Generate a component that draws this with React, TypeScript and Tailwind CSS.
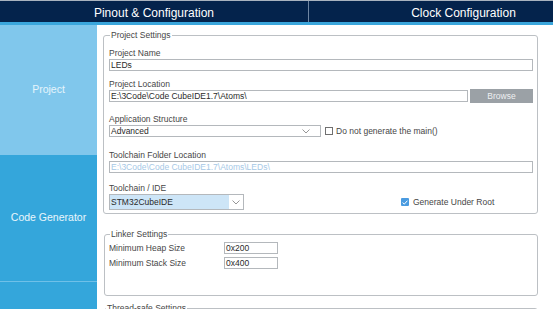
import React from "react";

const Chevron = () => (
  <svg width="8" height="5" viewBox="0 0 8 5" fill="none">
    <path d="M0.5 0.5L4 4L7.5 0.5" stroke="#8a8a8a" strokeWidth="0.9" />
  </svg>
);

const Label = ({ children }: { children: React.ReactNode }) => (
  <div className="text-[8.5px] leading-[10px] text-[#464646]">{children}</div>
);

const TextBox = ({ value, muted = false, className = "" }: { value: string; muted?: boolean; className?: string }) => (
  <div
    className={`h-[12px] border border-[#b4b8bc] bg-white pl-[1px] flex items-center text-[8.5px] leading-[10px] whitespace-nowrap overflow-hidden ${
      muted ? "text-[#a6c8e6]" : "text-[#2a2a2a]"
    } ${className}`}
  >
    {value}
  </div>
);

export default function App() {
  return (
    <div
      className="w-[553px] h-[309px] overflow-hidden bg-white border-t border-[#a9b3bf] flex flex-col"
      style={{ fontFamily: '"Liberation Sans", Arial, sans-serif' }}
    >
      {/* top tabs */}
      <div className="h-[21px] bg-[#04234c] flex shrink-0">
        <div className="w-[309px] shrink-0 border-r border-[#6f86a3] flex items-center justify-center pt-[2px] text-[12px] text-white">
          Pinout &amp; Configuration
        </div>
        <div className="w-[309px] shrink-0 flex items-center justify-center pt-[2px] text-[12px] text-white">
          Clock Configuration
        </div>
      </div>
      <div className="h-[3px] bg-[#3aa6dc] shrink-0" />

      <div className="flex flex-1 min-h-0">
        {/* sidebar */}
        <div className="w-[97px] shrink-0 flex flex-col">
          <div className="h-[130px] bg-[#80c7ec] flex items-center justify-center text-[10.5px] text-white/80">
            Project
          </div>
          <div className="h-[127px] bg-[#34a6db] border-b border-[#6fc0e8] flex items-center justify-center text-[10.5px] text-white/90">
            Code Generator
          </div>
          <div className="flex-1 bg-[#34a6db]" />
        </div>

        {/* content */}
        <div className="flex-1 pl-[6px] pt-[5px] flex flex-col">
          <fieldset className="w-[435px] border border-[#bcc0c4] rounded-[3px] pl-[5px] pr-[4px] pb-[3px]">
            <legend className="ml-[1px] px-[1px] text-[8.5px] leading-[10px] text-[#464646]">Project Settings</legend>
            <div className="mt-[8px]">
              <Label>Project Name</Label>
            </div>
            <TextBox value="LEDs" className="mt-[1px]" />

            <div className="mt-[8px]">
              <Label>Project Location</Label>
            </div>
            <div className="mt-[1px] flex items-center gap-[2px] h-[12px]">
              <TextBox value="E:\3Code\Code CubeIDE1.7\Atoms\" className="w-[359px]" />
              <div className="flex-1 h-[14px] bg-[#9ba1a6] flex items-center justify-center text-[8.5px] text-[#eef0f2]">
                Browse
              </div>
            </div>

            <div className="mt-[12px]">
              <Label>Application Structure</Label>
            </div>
            <div className="mt-[1px] flex items-center h-[12px]">
              <div className="w-[212px] h-[12px] border border-[#b4b8bc] flex items-center justify-between pl-[1px] pr-[10px] text-[8.5px] text-[#2a2a2a]">
                <span>Advanced</span>
                <Chevron />
              </div>
              <div className="ml-[4px] w-[8px] h-[8px] border border-[#707070] bg-white" />
              <span className="ml-[3px] text-[8.5px] text-[#464646]">Do not generate the main()</span>
            </div>

            <div className="mt-[13px]">
              <Label>Toolchain Folder Location</Label>
            </div>
            <TextBox value="E:\3Code\Code CubeIDE1.7\Atoms\LEDs\" muted className="mt-[1px]" />

            <div className="mt-[10px]">
              <Label>Toolchain / IDE</Label>
            </div>
            <div className="mt-[1px] flex items-center h-[16px]">
              <div className="w-[135px] h-[16px] border border-[#b4b8bc] flex">
                <div className="w-[119px] bg-[#cde5f7] flex items-center pl-[1px] text-[8.5px] text-[#2a2a2a]">STM32CubeIDE</div>
                <div className="flex-1 flex items-center justify-center">
                  <Chevron />
                </div>
              </div>
              <div className="ml-[157px] w-[8px] h-[8px] rounded-[1px] bg-[#4a9be0] flex items-center justify-center">
                <svg width="6" height="5" viewBox="0 0 6 5" fill="none">
                  <path d="M0.6 2.6L2.3 4.1L5.4 0.7" stroke="white" strokeWidth="1" />
                </svg>
              </div>
              <span className="ml-[4px] text-[8.5px] text-[#464646]">Generate Under Root</span>
            </div>
          </fieldset>

          <fieldset className="mt-[15px] ml-[1px] w-[434px] border border-[#bcc0c4] rounded-[3px] pl-[4px] pr-[4px] pb-[26px]">
            <legend className="ml-[1px] px-[1px] text-[8.5px] leading-[10px] text-[#464646]">Linker Settings</legend>
            <div className="mt-[3px] flex items-center h-[12px]">
              <div className="w-[115px] text-[8.5px] text-[#464646]">Minimum Heap Size</div>
              <TextBox value="0x200" className="w-[54px]" />
            </div>
            <div className="mt-[3px] flex items-center h-[12px]">
              <div className="w-[115px] text-[8.5px] text-[#464646]">Minimum Stack Size</div>
              <TextBox value="0x400" className="w-[54px]" />
            </div>
          </fieldset>

          <fieldset className="mt-[7px] ml-[1px] w-[434px] h-[40px] border border-[#bcc0c4] rounded-[3px]">
            <legend className="ml-[1px] px-[1px] text-[8.5px] leading-[10px] text-[#464646]">Thread-safe Settings</legend>
          </fieldset>
        </div>
      </div>
    </div>
  );
}
